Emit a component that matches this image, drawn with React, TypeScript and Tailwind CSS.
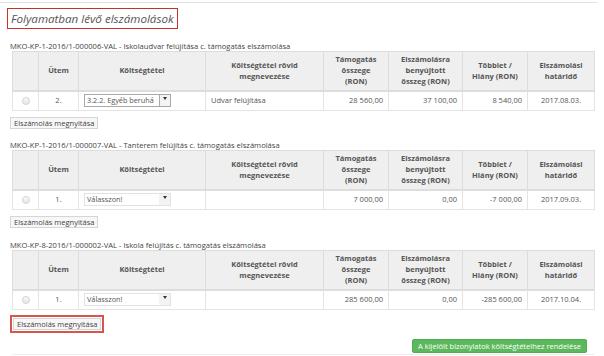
type Row = {
  utem: string;
  select: string;
  filled: boolean;
  name: string;
  tam: string;
  benyujtott: string;
  tobblet: string;
  hatarido: string;
};

type Block = {
  caption: string;
  row: Row;
  highlight?: boolean;
};

const blocks: Block[] = [
  {
    caption:
      "MKO-KP-1-2016/1-000006-VAL - Iskolaudvar felújítása c. támogatás elszámolása",
    row: {
      utem: "2.",
      select: "3.2.2. Egyéb beruhá",
      filled: true,
      name: "Udvar felújítása",
      tam: "28 560,00",
      benyujtott: "37 100,00",
      tobblet: "8 540,00",
      hatarido: "2017.08.03.",
    },
  },
  {
    caption:
      "MKO-KP-1-2016/1-000007-VAL - Tanterem felújítás c. támogatás elszámolása",
    row: {
      utem: "1.",
      select: "Válasszon!",
      filled: false,
      name: "",
      tam: "7 000,00",
      benyujtott: "0,00",
      tobblet: "-7 000,00",
      hatarido: "2017.09.03.",
    },
  },
  {
    caption:
      "MKO-KP-8-2016/1-000002-VAL - Iskola felújítás c. támogatás elszámolása",
    row: {
      utem: "1.",
      select: "Válasszon!",
      filled: false,
      name: "",
      tam: "285 600,00",
      benyujtott: "0,00",
      tobblet: "-285 600,00",
      hatarido: "2017.10.04.",
    },
    highlight: true,
  },
];

function Select({ value, filled }: { value: string; filled: boolean }) {
  return (
    <div
      className={`flex h-[13px] w-[87px] items-stretch border bg-white ${
        filled ? "border-[#a9a9a9]" : "border-[#e2e2e2]"
      }`}
    >
      <span className="flex-1 whitespace-nowrap pl-[2px] text-[7.3px] leading-[11px] text-[#555]">
        {value}
      </span>
      <span
        className={`flex w-[11px] items-start justify-center pt-[2px] ${
          filled ? "border-l border-[#a9a9a9] bg-[#f4f4f4]" : "bg-[#f3f3f3]"
        }`}
      >
        <span className="h-0 w-0 border-x-[2px] border-t-[3px] border-x-transparent border-t-[#333]" />
      </span>
    </div>
  );
}

function OpenButton() {
  return (
    <button className="block h-[12px] border border-[#d6d6d6] bg-[#f7f7f7] px-[3px] text-[7.5px] leading-[10px] text-[#444]">
      Elszámolás megnyitása
    </button>
  );
}

function Table({ row }: { row: Row }) {
  const th =
    "border border-[#dddddd] border-b-2 bg-[#efefef] px-[3px] text-center align-middle font-bold leading-[11px] text-[#555]";
  const td = "border border-[#e4e4e4] px-[5px] align-middle leading-[11px] text-[#555]";
  return (
    <table className="ml-[2px] w-[582px] table-fixed border-collapse text-[7.5px]">
      <colgroup>
        <col className="w-[26px]" />
        <col className="w-[40px]" />
        <col className="w-[127px]" />
        <col className="w-[118px]" />
        <col className="w-[65px]" />
        <col className="w-[74px]" />
        <col className="w-[65px]" />
        <col className="w-[67px]" />
      </colgroup>
      <thead>
        <tr className="h-[39px]">
          <th className={th}></th>
          <th className={th}>Ütem</th>
          <th className={th}>Költségtétel</th>
          <th className={th}>
            Költségtétel rövid
            <br />
            megnevezése
          </th>
          <th className={th}>
            Támogatás
            <br />
            összege
            <br />
            (RON)
          </th>
          <th className={th}>
            Elszámolásra
            <br />
            benyújtott
            <br />
            összeg (RON)
          </th>
          <th className={th}>
            Többlet /
            <br />
            Hiány (RON)
          </th>
          <th className={th}>
            Elszámolási
            <br />
            határidő
          </th>
        </tr>
      </thead>
      <tbody>
        <tr className="h-[20px]">
          <td className={td}>
            <div className="mx-auto h-[8px] w-[8px] rounded-full border border-[#d4d4d4] bg-gradient-to-b from-[#fafafa] to-[#e6e6e6]" />
          </td>
          <td className={`${td} text-center`}>{row.utem}</td>
          <td className={td}>
            <Select value={row.select} filled={row.filled} />
          </td>
          <td className={`${td} whitespace-nowrap`}>{row.name}</td>
          <td className={`${td} text-right`}>{row.tam}</td>
          <td className={`${td} text-right`}>{row.benyujtott}</td>
          <td className={`${td} text-right`}>{row.tobblet}</td>
          <td className={`${td} text-center`}>{row.hatarido}</td>
        </tr>
      </tbody>
    </table>
  );
}

export default function App() {
  return (
    <div className="h-[356px] w-[604px] overflow-hidden bg-white font-['Open_Sans',sans-serif] text-[#555]">
      <div className="mr-[7px] mt-[2px] border-t border-[#e2e2e2]" />

      <div className="ml-[7px] mt-[5px] flex h-[21px] w-fit items-center border border-[#c9302c] px-[3px]">
        <h1 className="text-[11.6px] italic leading-[19px] text-[#555]">
          Folyamatban lévő elszámolások
        </h1>
      </div>

      <div className="px-[10px]">
        {blocks.map((b, i) => (
          <section key={i} className={i === 2 ? "mt-[13px]" : i === 0 ? "mt-[13px]" : "mt-[12px]"}>
            <p className="h-[9px] whitespace-nowrap text-[7.6px] leading-[9px] text-[#444]">
              {b.caption}
            </p>
            <Table row={b.row} />
            {b.highlight ? (
              <div className="mt-[5px] flex w-fit border-2 border-[#d9534f] p-[1px]">
                <OpenButton />
              </div>
            ) : (
              <div className="mt-[6px] flex">
                <OpenButton />
              </div>
            )}
          </section>
        ))}

        <div className="mr-[7px] mt-[6px] flex justify-end">
          <button className="h-[14px] rounded-[2px] border border-[#4cae4c] bg-[#5cb85c] px-[5px] text-[7.5px] leading-[12px] text-white">
            A kijelölt bizonylatok költségtételhez rendelése
          </button>
        </div>
        <div className="ml-[2px] mt-[1px] border-t border-[#eeeeee]" />
      </div>
    </div>
  );
}
